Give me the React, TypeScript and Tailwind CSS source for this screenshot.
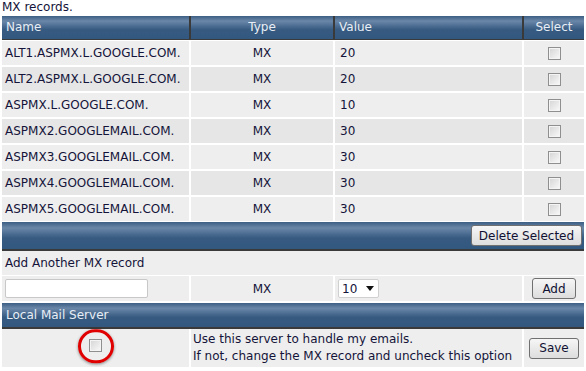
import { ChangeEvent, useState } from "react";

type MxRecord = { name: string; value: number };

const records: MxRecord[] = [
    { name: "ALT1.ASPMX.L.GOOGLE.COM.", value: 20 },
    { name: "ALT2.ASPMX.L.GOOGLE.COM.", value: 20 },
    { name: "ASPMX.L.GOOGLE.COM.", value: 10 },
    { name: "ASPMX2.GOOGLEMAIL.COM.", value: 30 },
    { name: "ASPMX3.GOOGLEMAIL.COM.", value: 30 },
    { name: "ASPMX4.GOOGLEMAIL.COM.", value: 30 },
    { name: "ASPMX5.GOOGLEMAIL.COM.", value: 30 },
];

const barBg = "bg-[linear-gradient(to_bottom,#3d5f84_0%,#6a87a8_22%,#4a6b90_45%,#365a80_60%,#335880_100%)]";

const Checkbox = () => (
    <span className="inline-block w-[13px] h-[13px] border border-[#8f8f8f] bg-[linear-gradient(135deg,#d4d4d4,#fafafa)] shadow-[inset_0_0_0_1px_#f4f4f4]" />
);

const Button = ({ label, className = "" }: { label: string; className?: string }) => (
    <button className={`h-[21px] px-1 whitespace-nowrap rounded-[3px] border border-[#707070] bg-[linear-gradient(to_bottom,#f6f6f6,#dddddd)] text-[12px] leading-none text-[#111133] ${className}`}>
        {label}
    </button>
);

const App = () => {
    const [newName, setNewName] = useState("");

    return (
        <div className="w-[586px] h-[371px] bg-white font-['DejaVu_Sans',Verdana,sans-serif] text-[12px] text-[#14143a] overflow-hidden">
            <div className="h-[16px] pl-[2px] leading-[15px]">MX records.</div>

            {/* column headers */}
            <div className="mx-[2px] grid grid-cols-[187px_142px_187px_1fr] gap-x-[2px] bg-[#3a3a3a] pb-[1px]">
                <div className={`${barBg} h-[23px] pl-[4px] leading-[23px] text-[#e8eef5]`}>Name</div>
                <div className={`${barBg} h-[23px] text-center leading-[23px] text-[#e8eef5]`}>Type</div>
                <div className={`${barBg} h-[23px] pl-[4px] leading-[23px] text-[#e8eef5]`}>Value</div>
                <div className={`${barBg} h-[23px] text-center leading-[23px] text-[#e8eef5]`}>Select</div>
            </div>

            <div className="mx-[2px] grid grid-cols-[187px_142px_187px_1fr] gap-[2px] pt-[1px]">
                {records.map((r, i) => {
                    const bg = i % 2 === 0 ? "bg-[#eeeeee]" : "bg-[#e6e6e6]";
                    return [
                        <div key={r.name + "n"} className={`${bg} h-[24px] pl-[3px] flex items-center`}>{r.name}</div>,
                        <div key={r.name + "t"} className={`${bg} h-[24px] flex items-center justify-center`}>MX</div>,
                        <div key={r.name + "v"} className={`${bg} h-[24px] pl-[5px] flex items-center`}>{r.value}</div>,
                        <div key={r.name + "s"} className={`${bg} h-[24px] flex items-center justify-center`}><Checkbox /></div>,
                    ];
                })}
            </div>

            {/* delete bar */}
            <div className={`mx-[2px] mt-[1px] h-[29px] ${barBg} border-b-2 border-[#3a3a3a] flex items-center justify-end pr-[2px]`}>
                <Button label="Delete Selected" className="w-[111px]" />
            </div>

            <div className="mx-[2px] bg-[#eeeeee] h-[24px] pl-[3px] flex items-center">Add Another MX record</div>

            <div className="mx-[2px] mt-[1px] grid grid-cols-[187px_142px_187px_1fr] gap-x-[2px]">
                <div className="bg-[#eeeeee] h-[25px] pl-[3px] flex items-center">
                    <input
                        value={newName}
                        onChange={(e: ChangeEvent<HTMLInputElement>) => setNewName(e.target.value)}
                        className="w-[143px] h-[19px] bg-white border border-[#c8c8c8] rounded-[2px] outline-none px-1 text-[12px]"
                    />
                </div>
                <div className="bg-[#eeeeee] h-[25px] flex items-center justify-center">MX</div>
                <div className="bg-[#eeeeee] h-[25px] pl-[3px] flex items-center">
                    <div className="w-[41px] h-[19px] bg-white border border-[#d0d0d0] rounded-[2px] flex items-center pl-[3px] gap-[9px]">
                        <span>10</span>
                        <svg width="8" height="5" viewBox="0 0 8 5"><path d="M0 0 H8 L4 5 Z" fill="#111" /></svg>
                    </div>
                </div>
                <div className="bg-[#eeeeee] h-[25px] flex items-center justify-center">
                    <Button label="Add" className="w-[44px] h-[20px]" />
                </div>
            </div>

            {/* local mail server */}
            <div className={`mx-[2px] mt-[2px] h-[26px] ${barBg} border-b-2 border-[#3a3a3a] pl-[4px] leading-[24px] text-[#e8eef5]`}>
                Local Mail Server
            </div>

            <div className="mx-[2px] grid grid-cols-[187px_331px_1fr] gap-x-[2px]">
                <div className="bg-[#eeeeee] h-[38px] flex items-center justify-center">
                    <div className="relative">
                        <Checkbox />
                        <span className="absolute left-1/2 top-1/2 -translate-x-1/2 -translate-y-[55%] w-[36px] h-[34px] rounded-full border-[3px] border-[#e00000] shadow-[0_1px_3px_rgba(0,0,0,0.45)]" />
                    </div>
                </div>
                <div className="bg-[#eeeeee] h-[38px] pl-[2px] flex flex-col justify-center leading-[17px]">
                    <span>Use this server to handle my emails.</span>
                    <span>If not, change the MX record and uncheck this option</span>
                </div>
                <div className="bg-[#eeeeee] h-[38px] flex items-center justify-center">
                    <Button label="Save" className="w-[50px]" />
                </div>
            </div>
        </div>
    );
};

export default App;
